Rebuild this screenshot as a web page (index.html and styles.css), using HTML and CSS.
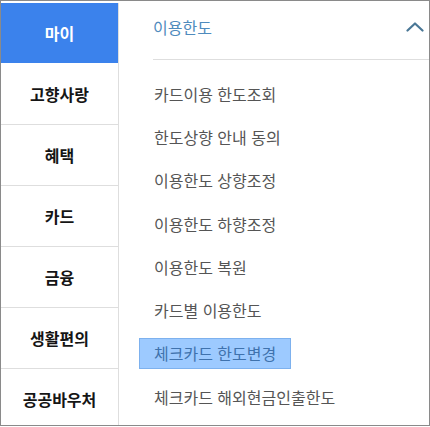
FILE: index.html
```html
<!DOCTYPE html>
<html lang="ko">
<head>
<meta charset="utf-8">
<link rel="stylesheet" href="styles.css">
</head>
<body>
<div class="frame">
  <nav class="side">
    <div class="side-item active">마이</div>
    <div class="side-item">고향사랑</div>
    <div class="side-item">혜택</div>
    <div class="side-item">카드</div>
    <div class="side-item">금융</div>
    <div class="side-item">생활편의</div>
    <div class="side-item last">공공바우처</div>
  </nav>
  <section class="panel">
    <div class="panel-head">
      <span class="panel-title">이용한도</span>
      <svg class="chev" width="18" height="10" viewBox="0 0 18 10"><polyline points="1.5,8.5 9,1.5 16.5,8.5" fill="none" stroke="#4a7796" stroke-width="2.2" stroke-linecap="round" stroke-linejoin="round"/></svg>
    </div>
    <ul class="menu">
      <li class="menu-item"><span>카드이용 한도조회</span></li>
      <li class="menu-item"><span>한도상향 안내 동의</span></li>
      <li class="menu-item"><span>이용한도 상향조정</span></li>
      <li class="menu-item"><span>이용한도 하향조정</span></li>
      <li class="menu-item"><span>이용한도 복원</span></li>
      <li class="menu-item"><span>카드별 이용한도</span></li>
      <li class="menu-item"><span class="sel">체크카드 한도변경</span></li>
      <li class="menu-item"><span>체크카드 해외현금인출한도</span></li>
    </ul>
  </section>
</div>
</body>
</html>
```

FILE: styles.css
```css
html, body {
  margin: 0;
  padding: 0;
  background: #fff;
}
body {
  font-family: "Noto Sans CJK KR", "Noto Sans", sans-serif;
}
.frame {
  box-sizing: border-box;
  width: 430px;
  height: 426px;
  border: 1px solid #8a8a8a;
  padding-top: 2px;
  display: flex;
  overflow: hidden;
}
.side {
  width: 117px;
  flex: none;
  border-right: 1px solid #dedede;
  display: flex;
  flex-direction: column;
}
.side-item {
  height: 60px;
  border-bottom: 1px solid #dedede;
  display: flex;
  align-items: center;
  justify-content: center;
  font-size: 16px;
  font-weight: 700;
  color: #151515;
  flex: none;
}
.side-item.active {
  background: #3b82ec;
  color: #fff;
  border-bottom-color: #fff;
}
.side-item.last {
  border-bottom: none;
}
.panel {
  flex: 1;
  display: flex;
  flex-direction: column;
}
.panel-head {
  margin-left: 34px;
  height: 60px;
  border-bottom: 1px solid #dedede;
  display: flex;
  justify-content: space-between;
  align-items: flex-start;
  padding: 13px 5px 0 0;
  box-sizing: border-box;
}
.panel-title {
  font-size: 16px;
  line-height: 22px;
  color: #4f8bbd;
}
.chev {
  margin-top: 6px;
}
.menu {
  list-style: none;
  margin: 0;
  padding: 19px 0 0 20px;
}
.menu-item {
  height: 43.3px;
}
.menu-item span {
  display: inline-block;
  box-sizing: border-box;
  height: 31px;
  line-height: 29px;
  padding: 0 14px;
  border: 1px solid transparent;
  font-size: 16px;
  color: #555;
}
.menu-item span.sel {
  background: #9dcaff;
  border-color: #7db1ee;
  color: #3f72ad;
}
```
